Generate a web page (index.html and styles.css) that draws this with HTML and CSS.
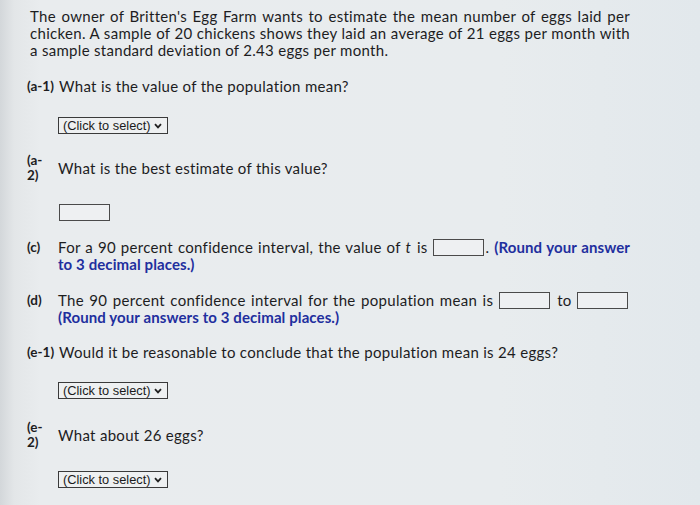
FILE: index.html
```html
<!DOCTYPE html>
<html>
<head>
<meta charset="utf-8">
<link rel="stylesheet" href="styles.css">
</head>
<body>
<div class="page">
  <p class="intro">The owner of Britten's Egg Farm wants to estimate the mean number of eggs laid per chicken. A sample of 20 chickens shows they laid an average of 21 eggs per month with a sample standard deviation of 2.43 eggs per month.</p>

  <div class="row q-a1">
    <span class="lbl tight">(a-1)</span>
    <div class="txt">What is the value of the population mean?</div>
  </div>
  <div class="ans sel-a1"><span class="select"><span class="opt">(Click to select)</span><svg class="chev" viewBox="0 0 8 6" width="8" height="6"><path d="M1 1.2 L4 4.4 L7 1.2" fill="none" stroke="#222" stroke-width="1.8"/></svg></span></div>

  <div class="row stack q-a2">
    <span class="lbl two">(a-<br>2)</span>
    <div class="txt">What is the best estimate of this value?</div>
  </div>
  <div class="ans inp-a2"><span class="box"></span></div>

  <div class="row q-c">
    <span class="lbl">(c)</span>
    <div class="txt just">For a 90 percent confidence interval, the value of <em>t</em> is <span class="box inl"></span>. <b class="blue">(Round your answer</b> <b class="blue">to 3 decimal places.)</b></div>
  </div>

  <div class="row q-d">
    <span class="lbl">(d)</span>
    <div class="txt just">The 90 percent confidence interval for the population mean is <span class="box inl"></span> to <span class="box inl"></span> <b class="blue">(Round your answers to 3 decimal places.)</b></div>
  </div>

  <div class="row q-e1">
    <span class="lbl tight">(e-1)</span>
    <div class="txt">Would it be reasonable to conclude that the population mean is 24 eggs?</div>
  </div>
  <div class="ans sel-e1"><span class="select"><span class="opt">(Click to select)</span><svg class="chev" viewBox="0 0 8 6" width="8" height="6"><path d="M1 1.2 L4 4.4 L7 1.2" fill="none" stroke="#222" stroke-width="1.8"/></svg></span></div>

  <div class="row stack q-e2">
    <span class="lbl two">(e-<br>2)</span>
    <div class="txt">What about 26 eggs?</div>
  </div>
  <div class="ans sel-e2"><span class="select"><span class="opt">(Click to select)</span><svg class="chev" viewBox="0 0 8 6" width="8" height="6"><path d="M1 1.2 L4 4.4 L7 1.2" fill="none" stroke="#222" stroke-width="1.8"/></svg></span></div>
</div>
</body>
</html>
```
FILE: styles.css
```css
html, body {
  margin: 0;
  padding: 0;
}
body {
  width: 700px;
  height: 505px;
  overflow: hidden;
  background: linear-gradient(to right, #d3d7da 0px, #e3e6e8 14px, #e9ecee 40px, #e8ecee 500px, #e2e8ec 700px);
  font-family: Lato, "Open Sans", sans-serif;
  font-size: 15px;
  letter-spacing: 0.3px;
  color: #1d1d1f;
}
.page {
  padding: 8px 0 0 27px;
  width: 603px;
}
.intro {
  margin: 0 0 0 3px;
  line-height: 17px;
  text-align: justify;
}
.row {
  display: flex;
  line-height: 17px;
}
.lbl {
  font-weight: bold;
  width: 31px;
  flex: none;
  font-size: 13.5px;
  letter-spacing: 0;
}
.lbl.tight {
  width: 32px;
}
.txt {
  flex: 1;
}
.just {
  text-align: justify;
  line-height: 17px;
}
.stack {
  align-items: center;
}
.lbl.two {
  line-height: 15px;
}
.q-a1 { margin-top: 19px; }
.sel-a1 { margin-top: 22px; }
.q-a2 { margin-top: 19px; }
.inp-a2 { margin-top: 21px; }
.q-c { margin-top: 18px; }
.q-d { margin-top: 19px; }
.q-e1 { margin-top: 18px; }
.sel-e1 { margin-top: 21px; }
.q-e2 { margin-top: 21px; }
.sel-e2 { margin-top: 21px; }
.ans {
  padding-left: 31px;
  display: flex;
}
.select {
  display: inline-flex;
  align-items: center;
  gap: 4px;
  box-sizing: border-box;
  height: 17px;
  width: 110px;
  padding: 0 3px 0 4px;
  border: 1px solid #3a3a3a;
  background: #eef0f1;
  font-family: "Liberation Sans", Arial, sans-serif;
  font-size: 12.8px;
  letter-spacing: 0;
  color: #1b1b1b;
  white-space: nowrap;
}
.opt {
  flex: none;
  line-height: 15px;
}
.chev {
  display: block;
  flex: none;
}
.box {
  display: inline-block;
  box-sizing: border-box;
  width: 51px;
  height: 17px;
  border: 1px solid #4a4a4a;
  background: #eef0f2;
}
.ans .box {
  margin-left: 1px;
}
.box.inl {
  vertical-align: -3px;
  margin-right: 2px;
}
.blue {
  color: #1f2f9e;
  letter-spacing: 0.1px;
}
em {
  font-style: italic;
  padding-right: 1px;
}
```
